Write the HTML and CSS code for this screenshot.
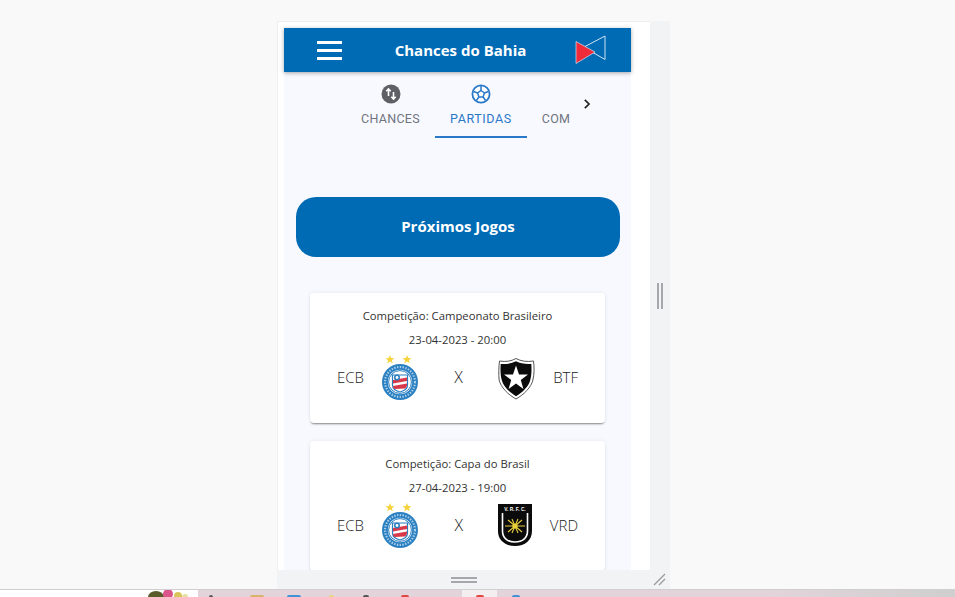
FILE: index.html
```html
<!doctype html>
<html>

<head>
	<meta charset="utf-8">
	<title>Chances do Bahia</title>
	<link rel="stylesheet" href="styles.css">
</head>

<body>
	<svg class="defs" width="0" height="0">
		<symbol id="bahia" viewBox="1 0 38 48">
			<g transform="translate(0 1)">
				<polygon fill="#f6d33c" points="9,1 10.2,4 13.4,4.2 10.9,6.2 11.8,9.3 9,7.6 6.2,9.3 7.1,6.2 4.6,4.2 7.8,4"/>
				<polygon fill="#f6d33c" points="26,1 27.2,4 30.4,4.2 27.9,6.2 28.8,9.3 26,7.6 23.2,9.3 24.1,6.2 21.6,4.2 24.8,4"/>
			</g>
			<circle cx="19" cy="29" r="18" fill="#2a7fc1"/>
			<circle cx="19" cy="29" r="15" fill="none" stroke="#a9cfea" stroke-width="2.2" stroke-dasharray="1.4 1.4"/>
			<circle cx="19" cy="29" r="12.2" fill="#fff"/>
			<circle cx="19" cy="29" r="11.4" fill="none" stroke="#2a7fc1" stroke-width="1"/>
			<path fill="#fff" stroke="#2a7fc1" stroke-width="1.2" d="M11.500 22h15v10c0 4-3.500 6-7.500 7-4-1-7.500-3-7.500-7z"/>
			<path fill="#d8394a" d="M12 27l14-2.500v3.500l-14 2.500zM12 33l14-2.500v2c-.5 1.500-1.200 2.500-2 3l-10.500.5c-.8-.8-1.500-1.800-1.500-3z"/>
			<circle cx="16" cy="24.500" r="3" fill="#2a7fc1"/>
			<circle cx="16" cy="24.500" r="1.400" fill="#fff"/>
		</symbol>
		<symbol id="botafogo" viewBox="0 0 38 43">
			<path fill="#fff" stroke="#555" stroke-width="1" d="M19 1.500c5 2.800 11 3.500 17.500 2.500.8 6 .9 13-.6 19-1.800 7.500-9 14.500-16.900 19-7.900-4.500-15.100-11.500-16.900-19C1.600 17 1.700 10 2.500 4 9 5 14 4.300 19 1.500z"/>
			<path fill="#0b0b0b" d="M19 4.300c4.500 2.300 9.500 3 15.300 2.600.4 5.400.3 10.900-1 16-1.600 6.400-7.800 12.500-14.300 16.300C12.500 35.400 6.300 29.300 4.700 22.900c-1.300-5.100-1.400-10.600-1-16 5.800.4 10.800-.3 15.300-2.600z"/>
			<polygon fill="#fff" points="19,8.500 22,17.500 31,17.500 23.800,23 26.400,32 19,26.600 11.600,32 14.200,23 7,17.500 16,17.500"/>
		</symbol>
	</svg>

	<div class="frame">
		<div class="viewport">
			<div class="app">
				<header class="topbar">
					<div class="burger"><span></span><span></span><span></span></div>
					<h1>Chances do Bahia</h1>
					<svg class="logo" width="32" height="30" viewBox="0 0 32 30">
						<path fill="none" stroke="#cfe3f5" stroke-width="1" d="M10 11.500L30 1v23.500L17 17"/>
						<path fill="#ef2b3a" stroke="#cfe3f5" stroke-width=".7" d="M1 6.500l19 10.500L1 28.500z"/>
					</svg>
				</header>

				<nav class="tabs">
					<div class="tab-list">
						<div class="tab">
							<svg width="20" height="20" viewBox="0 0 20 20">
								<circle cx="10" cy="10" r="9.500" fill="#5f5f66"/>
								<path fill="none" stroke="#fff" stroke-width="1.600" d="M7.500 12V5M5.300 7.200l2.200-2.200 2.200 2.200M12.500 8v7M10.300 12.800l2.200 2.200 2.200-2.200"/>
							</svg>
							<span>CHANCES</span>
						</div>
						<div class="tab active">
							<svg width="20" height="20" viewBox="0 0 20 20">
								<circle cx="10" cy="10" r="8.600" fill="#fff" stroke="#2a78c8" stroke-width="1.800"/>
								<polygon fill="#fff" stroke="#2a78c8" stroke-width="1.500" points="10,6.500 13.400,9 12.100,13 7.900,13 6.600,9"/>
								<path stroke="#2a78c8" stroke-width="1.500" d="M10 6.500V2M13.400 9l4-1.500M12.100 13l2.500 3.500M7.900 13l-2.500 3.500M6.600 9l-4-1.500"/>
							</svg>
							<span>PARTIDAS</span>
						</div>
						<div class="tab">
							<svg width="20" height="20" viewBox="0 0 20 20"></svg>
							<span>COM</span>
						</div>
					</div>
					<svg class="chevron" width="18" height="18" viewBox="0 0 18 18">
						<path fill="none" stroke="#222" stroke-width="1.700" d="M6.800 4.800L11 9l-4.200 4.200"/>
					</svg>
				</nav>

				<main class="content">
					<div class="banner">Próximos Jogos</div>

					<div class="card">
						<p>Competição: Campeonato Brasileiro</p>
						<p>23-04-2023 - 20:00</p>
						<div class="match">
							<div class="team">
								<span>ECB</span>
								<svg class="crest" width="38" height="48"><use href="#bahia"/></svg>
							</div>
							<span class="versus">X</span>
							<div class="team">
								<svg class="crest shield" width="38" height="43"><use href="#botafogo"/></svg>
								<span>BTF</span>
							</div>
						</div>
					</div>

					<div class="card">
						<p>Competição: Capa do Brasil</p>
						<p>27-04-2023 - 19:00</p>
						<div class="match">
							<div class="team">
								<span>ECB</span>
								<svg class="crest" width="38" height="48"><use href="#bahia"/></svg>
							</div>
							<span class="versus">X</span>
							<div class="team">
								<svg class="crest" width="34" height="42" viewBox="0 0 34 42">
									<path fill="#0b0b0b" d="M0 0h34v27c0 9-7 15-17 15S0 36 0 27z"/>
									<text x="17" y="6.500" class="crest-label">V. R. F. C.</text>
									<path fill="none" stroke="#fff" stroke-width="1.600" d="M4.500 9v18c0 7 5 11 12.500 11s12.500-4 12.500-11V9"/>
									<path stroke="#e8cf3a" stroke-width="1.100" d="M7 22h20M10 16l14 12M24 16L10 28M14 15l6 14M20 15l-6 14"/>
									<circle cx="17" cy="22" r="2.600" fill="#e8cf3a"/>
								</svg>
								<span>VRD</span>
							</div>
						</div>
					</div>
				</main>
			</div>
		</div>

		<div class="side-handle"><span></span><span></span></div>
		<div class="bottom-handle"><span></span><span></span></div>
		<div class="corner-handle">
			<svg width="20" height="19" viewBox="0 0 20 19">
				<path stroke="#9a9a9a" stroke-width="1.300" d="M4 15L15 4M9 15l6-6"/>
			</svg>
		</div>
	</div>

	<div class="taskbar">
		<div class="strip-white">
			<svg width="50" height="8" viewBox="0 0 50 8">
				<ellipse cx="8" cy="7" rx="8" ry="6" fill="#5a5a2a"/>
				<circle cx="20" cy="4" r="5" fill="#d9558a"/>
				<circle cx="30" cy="6" r="4" fill="#d8c65a"/>
				<circle cx="37" cy="7" r="3" fill="#e6dfa0"/>
			</svg>
		</div>
		<div class="strip-pink">
			<i class="dot dark d1"></i>
			<i class="dot amber d2"></i>
			<i class="dot blue d3"></i>
			<i class="dot yellow d4"></i>
			<i class="dot dark d5"></i>
			<i class="dot red d6"></i>
		</div>
		<div class="strip-light"><i class="dot red"></i></div>
		<div class="strip-end"><i class="dot blue"></i></div>
	</div>
</body>

</html>
```

FILE: styles.css
```css
html,
body {
	margin: 0;
	height: 597px;
	overflow: hidden;
}

body {
	background-color: #f9f9f9;
	font-family: "Open Sans", "Liberation Sans", sans-serif;
	color: #333;
	padding-top: 21px;
	box-sizing: border-box;
}

.defs {
	display: block;
	height: 0;
}

.frame {
	display: grid;
	grid-template-columns: 373px 20px;
	grid-template-rows: 549px 19px;
	width: 393px;
	margin-left: 277px;
	background-color: #f1f3f5;
}

.viewport {
	background-color: #fff;
	padding: 7px 19px 0 7px;
	overflow: hidden;
	box-shadow: inset 1px 1px 0 #eee;
}

.app {
	background-color: #f8f9ff;
	height: 600px;
}

/* topo */
.topbar {
	display: flex;
	align-items: center;
	height: 44px;
	padding: 0 24px 0 33px;
	background-color: #006bb5;
	box-shadow: 0 1px 4px rgba(0, 0, 0, 0.35);
}

.burger {
	display: flex;
	flex-direction: column;
	gap: 5px;
	width: 25px;
}

.burger>span {
	height: 3px;
	background-color: #fff;
}

.topbar>h1 {
	flex: 1;
	margin: 0;
	padding: 0 0 0 4px;
	text-align: center;
	font-size: 15px;
	font-weight: 700;
	color: #fff;
}

.logo {
	display: block;
}

/* abas */
.tabs {
	display: flex;
	align-items: flex-start;
	height: 66px;
	padding-left: 62px;
}

.tab-list {
	display: flex;
	width: 224px;
	overflow: hidden;
}

.tab {
	display: flex;
	flex-direction: column;
	align-items: center;
	flex-shrink: 0;
	height: 66px;
	box-sizing: border-box;
	padding: 12px 15px 0;
	font-family: Roboto, "Noto Sans", sans-serif;
	font-size: 12.500px;
	color: #70757d;
	letter-spacing: 0.3px;
}

.tab>span {
	margin-top: 7px;
}

.tab.active {
	color: #2a78c8;
	letter-spacing: 0.6px;
	border-bottom: 2px solid #2a78c8;
}

.chevron {
	margin: 23px 0 0 8px;
}

/* conteudo */
.content {
	padding: 59px 11px 0 12px;
}

.banner {
	display: flex;
	align-items: center;
	justify-content: center;
	height: 60px;
	box-sizing: border-box;
	padding-bottom: 2px;
	margin-bottom: 36px;
	border-radius: 20px;
	background-color: #006bb5;
	color: #fff;
	font-size: 15px;
	font-weight: 700;
}

.card {
	height: 130px;
	box-sizing: border-box;
	margin: 0 15px 18px 14px;
	padding: 14px 27px 0;
	background-color: #fff;
	border-radius: 4px;
	box-shadow: 0 2px 2px -1px rgba(0, 0, 0, 0.45), 0 0 4px rgba(0, 0, 0, 0.07);
	text-align: center;
}

.card>p {
	margin: 0 0 7px;
	font-size: 11.300px;
	line-height: 17px;
	color: #333;
}

.match {
	display: flex;
	align-items: center;
	justify-content: space-between;
	font-size: 15px;
	font-weight: 300;
	color: #222;
	margin-top: -2px;
}

.team {
	display: flex;
	align-items: center;
	gap: 18px;
}

.crest {
	display: block;
}

.shield {
	margin-top: 2px;
}

.crest-label {
	fill: #fff;
	font-family: "Liberation Sans", sans-serif;
	font-size: 4.800px;
	font-weight: 700;
	text-anchor: middle;
}

.versus {
	font-size: 16px;
}

/* alcas de redimensionar */
.side-handle {
	display: flex;
	justify-content: center;
	align-items: center;
	gap: 2px;
}

.side-handle>span {
	width: 2px;
	height: 26px;
	background-color: #a5a8ab;
}

.bottom-handle {
	display: flex;
	flex-direction: column;
	align-items: center;
	justify-content: center;
	gap: 2px;
}

.bottom-handle>span {
	width: 26px;
	height: 2px;
	background-color: #a5a8ab;
}

.corner-handle>svg {
	display: block;
}

/* barra de baixo */
.taskbar {
	display: flex;
	height: 8px;
	border-top: 1px solid #cfcfcf;
	overflow: hidden;
}

.dot {
	display: block;
	width: 8px;
	height: 4px;
	border-radius: 2px 2px 0 0;
	margin-top: 5px;
}

.dot.dark {
	background-color: #555;
	width: 4px;
}

.dot.amber {
	background-color: #d9b36a;
	width: 14px;
}

.dot.blue {
	background-color: #3f93d6;
}

.dot.yellow {
	background-color: #e8d67a;
	width: 5px;
}

.dot.red {
	background-color: #e0483f;
}

.dot.d1 {
	margin-left: 11px;
}

.dot.d2 {
	margin-left: 37px;
}

.dot.d3 {
	margin-left: 23px;
	width: 14px;
}

.dot.d4 {
	margin-left: 28px;
}

.dot.d5 {
	margin-left: 29px;
	width: 6px;
}

.dot.d6 {
	margin-left: 32px;
}

.strip-white {
	display: flex;
	justify-content: flex-end;
	width: 198px;
	background-color: #fff;
}

.strip-pink {
	display: flex;
	width: 264px;
	background-color: #e2d4da;
}

.strip-light {
	display: flex;
	justify-content: center;
	width: 35px;
	background-color: #f3eff0;
}

.strip-end {
	flex: 1;
	padding-left: 15px;
	background: linear-gradient(to right, #e2d4da, #e2d4da 60%, #cfcfcf);
}
```
